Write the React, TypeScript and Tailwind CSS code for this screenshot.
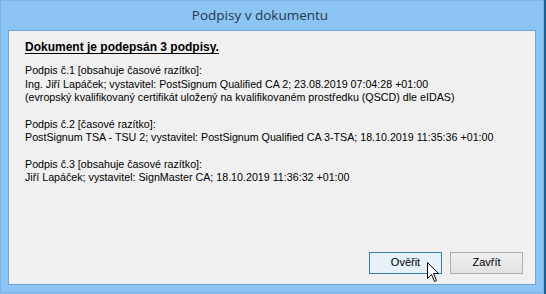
import React from 'react';

const Cursor = () => (
    <svg width="13" height="21" viewBox="0 0 13 21" className="absolute left-[427px] top-[262px]">
        <path
            d="M0.5 0.5 L0.5 16.5 L4.5 12.5 L7.5 19.5 L9.5 18.5 L6.5 11.5 L11.5 11.5 Z"
            fill="#ffffff"
            stroke="#000000"
            strokeWidth="1"
        />
    </svg>
);

const lines: string[][] = [
    [
        'Podpis č.1 [obsahuje časové razítko]:',
        'Ing. Jiří Lapáček; vystavitel: PostSignum Qualified CA 2; 23.08.2019 07:04:28 +01:00',
        '(evropský kvalifikovaný certifikát uložený na kvalifikovaném prostředku (QSCD) dle eIDAS)',
    ],
    [
        'Podpis č.2 [časové razítko]:',
        'PostSignum TSA - TSU 2; vystavitel: PostSignum Qualified CA 3-TSA; 18.10.2019 11:35:36 +01:00',
    ],
    [
        'Podpis č.3 [obsahuje časové razítko]:',
        'Jiří Lapáček; vystavitel: SignMaster CA; 18.10.2019 11:36:32 +01:00',
    ],
];

const App = () => {
    return (
        <div className="relative w-[546px] h-[294px] bg-[#8cc4f4] overflow-hidden flex">
            <div className="w-[544px] h-[293px] bg-[#8cc4f4] border border-[#79b4e8] flex flex-col">
                <div className="h-[29px] flex items-center justify-center text-[13.5px] text-[#26394f] font-['Open_Sans',sans-serif] pb-[1px] pr-[24px]">
                    Podpisy v dokumentu
                </div>
                <div className="mx-[7px] mb-[7px] flex-1 bg-[#f0f0f0] border border-[#6ea6d8] flex flex-col pl-[16px] pr-[12px] pt-[8px] pb-[10px] font-['Liberation_Sans',Arial,sans-serif] text-[10.7px] leading-[13.5px] text-black">
                    <div className="text-[12px] leading-[16px] font-bold underline underline-offset-2">
                        Dokument je podepsán 3 podpisy.
                    </div>
                    <div className="mt-[9px] flex flex-col gap-[13px]">
                        {lines.map((group, i) => (
                            <div key={i} className="flex flex-col">
                                {group.map((l, j) => (
                                    <div key={j} className="whitespace-nowrap">{l}</div>
                                ))}
                            </div>
                        ))}
                    </div>
                    <div className="mt-auto flex justify-end gap-[8px]">
                        <button className="w-[73px] h-[22px] bg-[#e5f1fb] border border-[#3c7fb1] text-[11px] text-black">
                            Ověřit
                        </button>
                        <button className="w-[73px] h-[22px] bg-gradient-to-b from-[#f0f0f0] to-[#e2e2e2] border border-[#adadad] text-[11px] text-black">
                            Zavřít
                        </button>
                    </div>
                </div>
            </div>
            <div className="w-[2px] h-full bg-[#1d5f93]" />
            <Cursor />
        </div>
    );
};

export default App;
